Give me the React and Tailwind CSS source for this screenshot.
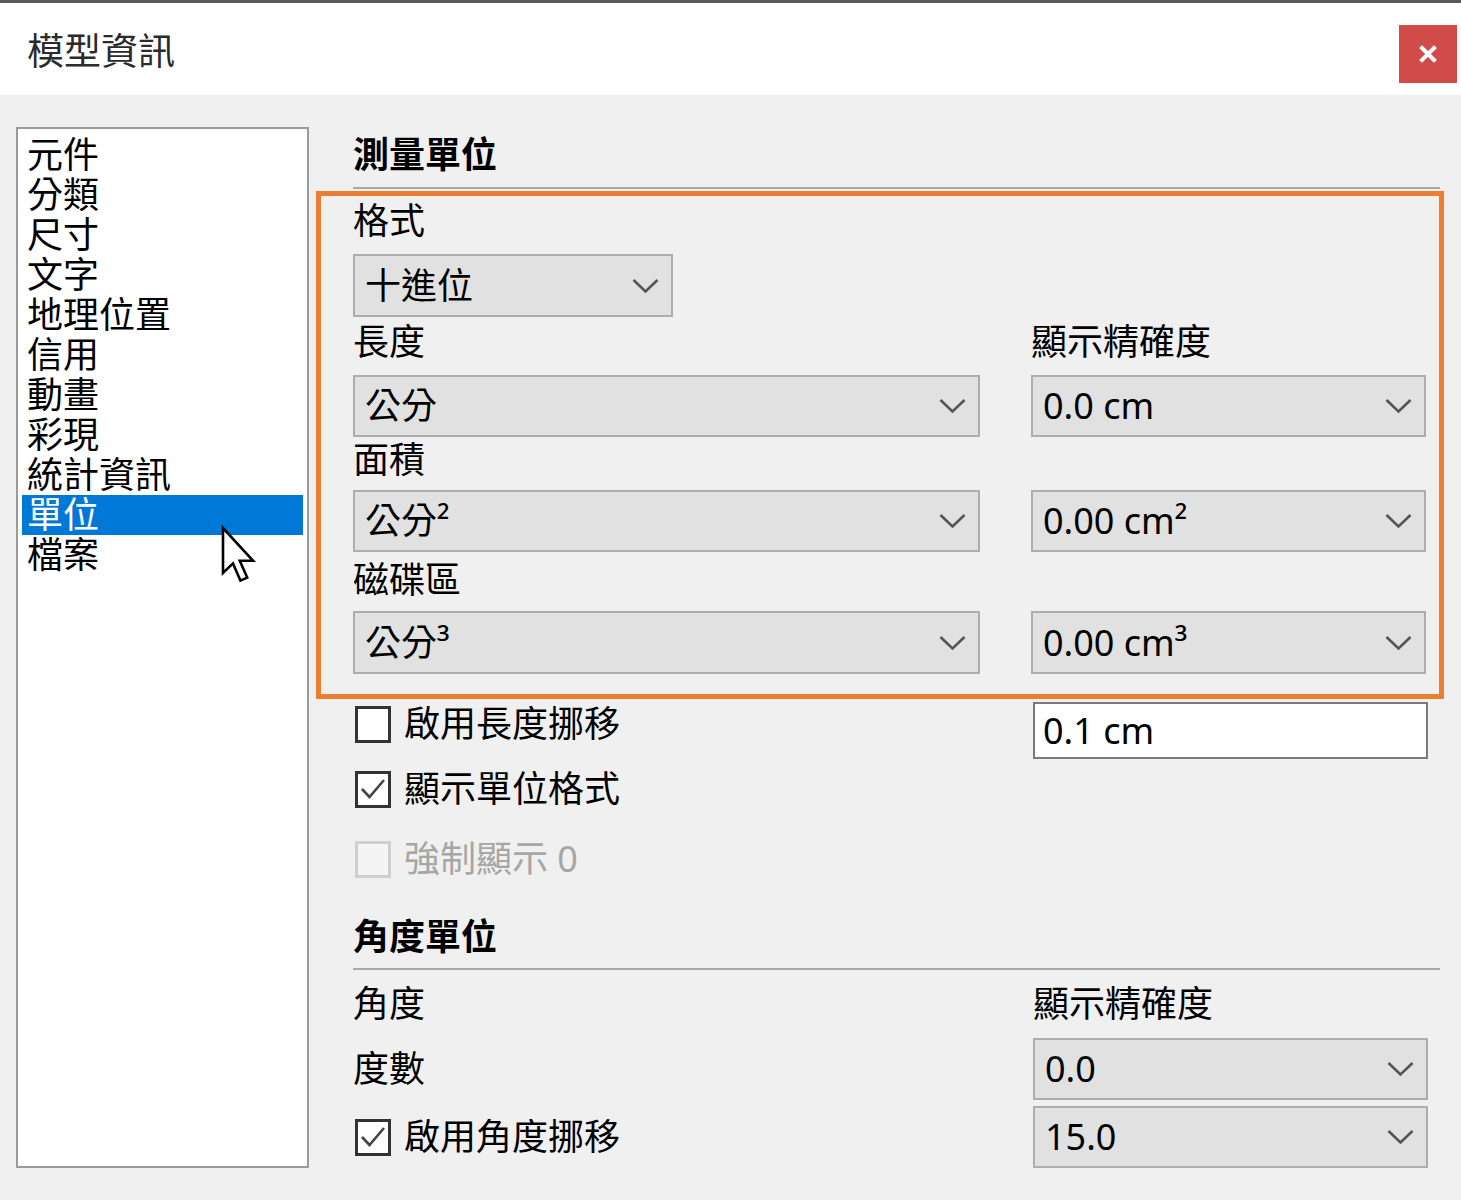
import React from "react";

const FONT = "font-['Noto_Sans','Noto_Sans_CJK_TC',sans-serif]";

function Chevron() {
  return (
    <svg width="27" height="16" viewBox="0 0 27 16" className="shrink-0">
      <path d="M1.5 2 L13.5 13.5 L25.5 2" fill="none" stroke="#555" strokeWidth="2.6" />
    </svg>
  );
}

function Dropdown({ label, className = "" }) {
  return (
    <div
      className={`flex items-center justify-between bg-[#e1e1e1] border-2 border-[#adadad] pl-[10px] pr-[12px] ${className}`}
    >
      <span className="text-[36px] leading-[40px] text-black whitespace-nowrap">{label}</span>
      <Chevron />
    </div>
  );
}

function Checkbox({ checked, disabled, label, className = "" }) {
  return (
    <div className={`flex items-center gap-[13px] ${className}`}>
      <div
        className={`w-[36px] h-[37px] border-[3px] flex items-center justify-center ${
          disabled ? "border-[#cfcfcf] bg-[#f4f4f4]" : "border-[#333] bg-white"
        }`}
      >
        {checked && (
          <svg width="28" height="24" viewBox="0 0 28 24">
            <path d="M3 12 L10.5 20 L25 3" fill="none" stroke="#444" strokeWidth="2.6" />
          </svg>
        )}
      </div>
      <span
        className={`text-[36px] leading-[40px] whitespace-nowrap ${
          disabled ? "text-[#a6a6a6]" : "text-black"
        }`}
      >
        {label}
      </span>
    </div>
  );
}

function Label({ children, className = "" }) {
  return <div className={`text-[36px] leading-[40px] text-black whitespace-nowrap ${className}`}>{children}</div>;
}

export default function App() {
  const items = ["元件", "分類", "尺寸", "文字", "地理位置", "信用", "動畫", "彩現", "統計資訊", "單位", "檔案"];
  return (
    <div className={`w-[1461px] h-[1200px] bg-[#f0f0f0] overflow-hidden ${FONT}`}>
      {/* top border */}
      <div className="h-[3px] bg-[#5a5a5a]" />
      {/* title bar */}
      <div className="h-[92px] bg-white flex items-start justify-between pl-[27px] pr-[4px]">
        <div className="mt-[26px] text-[37px] leading-[44px] text-[#2b2b2b]">模型資訊</div>
        <div className="mt-[22px] w-[58px] h-[58px] bg-[#d14b4b] flex items-center justify-center">
          <svg width="18" height="18" viewBox="0 0 18 18">
            <path d="M3 3 L15 15 M15 3 L3 15" stroke="white" strokeWidth="4" strokeLinecap="square" />
          </svg>
        </div>
      </div>

      {/* body */}
      <div className="flex">
        {/* list */}
        <div className="relative ml-[16px] mt-[32px] w-[293px] h-[1041px] bg-white border-2 border-[#9a9a9a] pt-[6px] px-[4px]">
          {items.map((it) => (
            <div
              key={it}
              className={`h-[40px] leading-[40px] text-[36px] pl-[5px] whitespace-nowrap ${
                it === "單位" ? "bg-[#0078d7] text-white" : "text-black"
              }`}
            >
              {it}
            </div>
          ))}
          <svg
            className="absolute left-[202px] top-[396px]"
            width="40"
            height="60"
            viewBox="0 0 20 30"
          >
            <path
              d="M1.5 1.5 L1.5 24 L6.5 19.2 L10.2 27.8 L13.6 26.3 L9.9 17.9 L16.6 17.9 Z"
              fill="white"
              stroke="black"
              strokeWidth="1.3"
              strokeLinejoin="miter"
            />
          </svg>
        </div>

        {/* right column */}
        <div className="ml-[7px] w-[1128px] flex flex-col">
          <div className="ml-[37px] mt-[40px] h-[40px] leading-[40px] text-[36px] font-bold text-black">測量單位</div>
          <div className="ml-[37px] mr-[4px] mt-[12px] h-[2px] bg-[#a8a8a8]" />

          {/* highlighted block */}
          <div className="mt-[2px] border-[5px] border-[#ed7d31] pl-[32px] pr-[11px] pt-[5px] pb-[20px]">
            <Label>格式</Label>
            <Dropdown label="十進位" className="mt-[13px] w-[320px] h-[63px]" />
            <div className="mt-[5px] grid grid-cols-[627px_395px] gap-x-[51px]">
              <Label>長度</Label>
              <Label>顯示精確度</Label>
            </div>
            <div className="mt-[13px] grid grid-cols-[627px_395px] gap-x-[51px]">
              <Dropdown label="公分" className="h-[62px]" />
              <Dropdown label="0.0 cm" className="h-[62px]" />
            </div>
            <Label className="mt-[3px]">面積</Label>
            <div className="mt-[10px] grid grid-cols-[627px_395px] gap-x-[51px]">
              <Dropdown label="公分²" className="h-[62px]" />
              <Dropdown label="0.00 cm²" className="h-[62px]" />
            </div>
            <Label className="mt-[8px]">磁碟區</Label>
            <div className="mt-[11px] grid grid-cols-[627px_395px] gap-x-[51px]">
              <Dropdown label="公分³" className="h-[63px]" />
              <Dropdown label="0.00 cm³" className="h-[63px]" />
            </div>
          </div>

          {/* checkboxes */}
          <div className="ml-[39px] mt-[3px] grid grid-cols-[627px_395px] gap-x-[51px] items-start">
            <Checkbox label="啟用長度挪移" className="mt-[2px]" />
            <div className="h-[57px] bg-white border-2 border-[#7a7a7a] pl-[8px] flex items-center">
              <span className="text-[36px] leading-[40px] text-black">0.1 cm</span>
            </div>
          </div>
          <Checkbox checked label="顯示單位格式" className="ml-[39px] mt-[10px]" />
          <Checkbox disabled label="強制顯示 0" className="ml-[39px] mt-[30px]" />

          <div className="ml-[37px] mt-[38px] h-[40px] leading-[40px] text-[36px] font-bold text-black">角度單位</div>
          <div className="ml-[37px] mr-[4px] mt-[11px] h-[2px] bg-[#a8a8a8]" />

          <div className="ml-[37px] mt-[14px] grid grid-cols-[629px_395px] gap-x-[51px]">
            <Label>角度</Label>
            <Label>顯示精確度</Label>
          </div>
          <div className="ml-[37px] mt-[14px] grid grid-cols-[629px_395px] gap-x-[51px] items-center">
            <Label>度數</Label>
            <Dropdown label="0.0" className="h-[62px]" />
          </div>
          <div className="ml-[39px] mt-[6px] grid grid-cols-[627px_395px] gap-x-[51px] items-center">
            <Checkbox checked label="啟用角度挪移" />
            <Dropdown label="15.0" className="h-[62px]" />
          </div>
        </div>
      </div>
    </div>
  );
}
